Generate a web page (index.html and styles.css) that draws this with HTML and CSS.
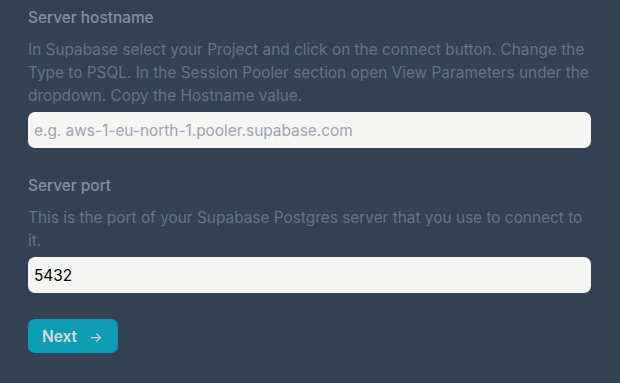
FILE: index.html
```html
<!DOCTYPE html>
<html>
    <head>
        <meta charset="utf-8">
        <title>Connect Supabase</title>
        <meta name="viewport" content="width=device-width, initial-scale=1.0">
        <link rel="stylesheet" href="styles.css">
    </head>
    <body>
        <form class="setup-form">
            <div class="field">
                <label class="field__label" for="hostname">Server hostname</label>
                <p class="field__help">In Supabase select your Project and click on the connect button. Change the Type to PSQL. In the Session Pooler section open View Parameters under the dropdown. Copy the Hostname value.</p>
                <input class="field__input" id="hostname" type="text" placeholder="e.g. aws-1-eu-north-1.pooler.supabase.com">
            </div>
            <div class="field">
                <label class="field__label" for="port">Server port</label>
                <p class="field__help">This is the port of your Supabase Postgres server that you use to connect to it.</p>
                <input class="field__input" id="port" type="text" value="5432">
            </div>
            <div class="actions">
                <button class="btn-next" type="button">Next <span class="btn-next__arrow">&rarr;</span></button>
            </div>
        </form>
    </body>
</html>
```

FILE: styles.css
```css
:root {
    --font-main: Inter, 'Noto Sans', Arial, sans-serif;

    --color-bg: #334155;
    --color-label: #8390a4;
    --color-help: #64748b;
    --color-input: #f5f5f4;
    --color-placeholder: #9ca3af;
    --color-accent: #0e9cb5;
    --color-btn-text: #d4dbe3;

    --fz-normal: 15.4px;
}
html, body {
    margin: 0;
    background-color: var(--color-bg);
}
body {
    font-family: var(--font-main);
    font-size: var(--fz-normal);
    line-height: 23px;
}
.setup-form {
    width: 563px;
    padding: 6px 28px 0;
    display: flex;
    flex-direction: column;
    gap: 26px;
}
.field {
    display: flex;
    flex-direction: column;
}
.field__label {
    color: var(--color-label);
    font-weight: 500;
}
.field__help {
    margin: 9px 0 5px;
    color: var(--color-help);
}
.field__input {
    box-sizing: border-box;
    height: 36px;
    width: 100%;
    border: 0;
    border-radius: 7px;
    padding: 0 6px;
    background-color: var(--color-input);
    font-family: var(--font-main);
    font-size: var(--fz-normal);
    color: #000;
    outline: none;
}
.field__input::placeholder {
    color: var(--color-placeholder);
}
.btn-next {
    height: 34px;
    width: 90px;
    border: 0;
    border-radius: 7px;
    padding: 0 0 0 14px;
    background-color: var(--color-accent);
    color: var(--color-btn-text);
    font-family: var(--font-main);
    font-size: var(--fz-normal);
    font-weight: 600;
    display: flex;
    align-items: center;
    gap: 12px;
    cursor: pointer;
}
.btn-next__arrow {
    font-weight: 400;
    font-size: 14px;
}
```
